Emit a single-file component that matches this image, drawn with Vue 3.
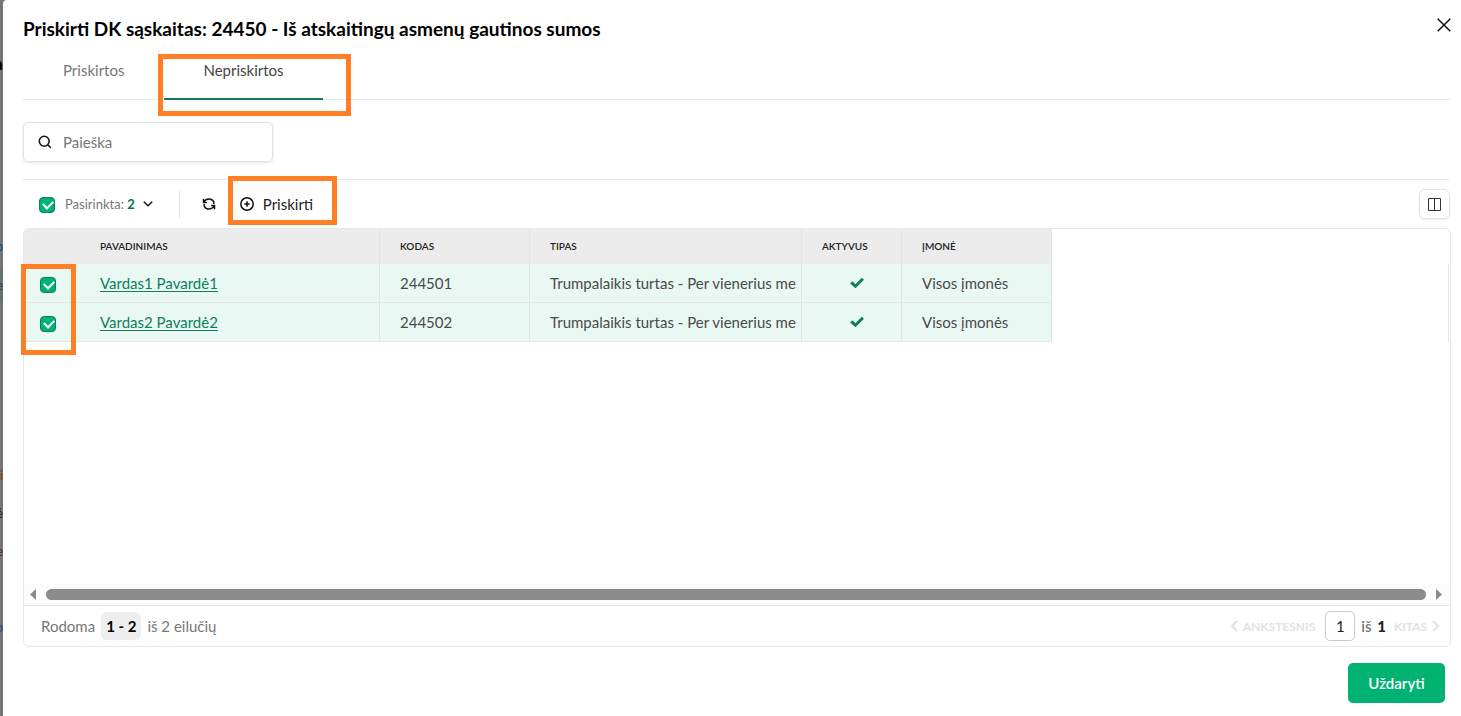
<script setup>
import { ref } from 'vue'

const search = ref('')
const page = ref('1')
const allSelected = ref(true)
const rows = ref([
  { id: 1, name: 'Vardas1 Pavardė1', code: '244501', type: 'Trumpalaikis turtas - Per vienerius me', company: 'Visos įmonės', selected: true },
  { id: 2, name: 'Vardas2 Pavardė2', code: '244502', type: 'Trumpalaikis turtas - Per vienerius me', company: 'Visos įmonės', selected: true }
])
</script>

<template>
  <div class="backdrop">
    <div class="behind" aria-hidden="true">
      <span class="bit bit-title">a</span>
      <span class="bit bit-link">p</span>
      <span class="band"></span>
      <span class="bit bit-row">e</span>
      <span class="bit bit-icon">i</span>
      <span class="bit bit-second">ė</span>
      <span class="bit bit-third">e</span>
      <span class="bit bit-last">o</span>
    </div>
    <section class="modal" role="dialog" aria-labelledby="dialog-title">
      <header class="head">
        <h1 id="dialog-title">Priskirti DK sąskaitas: 24450 - Iš atskaitingų asmenų gautinos sumos</h1>
        <button class="close" type="button" aria-label="Uždaryti langą">
          <svg width="14" height="14" viewBox="0 0 14 14"><path d="M.7.7l12.6 12.6M13.3.7L.7 13.3" /></svg>
        </button>
      </header>

      <nav class="tabs">
        <button class="tab" type="button">Priskirtos</button>
        <button class="tab active" type="button">Nepriskirtos<span class="mark mark-tab"></span></button>
      </nav>

      <label class="search">
        <svg width="14" height="14" viewBox="0 0 14 14"><circle cx="6.2" cy="6.2" r="4.9" /><path d="M9.8 9.8l3 3" /></svg>
        <input v-model="search" type="text" placeholder="Paieška" aria-label="Paieška" />
      </label>

      <div class="toolbar">
        <input v-model="allSelected" class="check" type="checkbox" aria-label="Pažymėti visas" />
        <button class="selected" type="button">
          <span>Pasirinkta: <b>2</b></span>
          <svg width="10" height="6" viewBox="0 0 10 6"><path d="M.8.8L5 4.8 9.2.8" /></svg>
        </button>
        <span class="divider"></span>
        <button class="refresh" type="button" aria-label="Atnaujinti">
          <svg width="14" height="14" viewBox="0 0 14 14">
            <path d="M1.800 5.200C3.600 1.300 9.600.6 11.800 4.900V7M1.500 1.800v3.600h3.400M12.200 8.800C10.400 12.700 4.400 13.400 2.200 9.100V7M12.500 12.200V8.600H9.100" />
          </svg>
        </button>
        <button class="assign" type="button">
          <svg width="14" height="14" viewBox="0 0 14 14"><circle cx="7" cy="7" r="6.2" /><path d="M7 4.3v5.4M4.3 7h5.4" /></svg>
          Priskirti
          <span class="mark mark-assign"></span>
        </button>
        <button class="columns" type="button" aria-label="Stulpeliai">
          <svg width="13" height="13" viewBox="0 0 13 13"><path d="M.5.5h12v12H.5zM6.5.5v12" /></svg>
        </button>
      </div>

      <div class="grid">
        <div class="rows">
          <table>
            <colgroup>
              <col class="c-check" /><col class="c-name" /><col class="c-code" />
              <col class="c-type" /><col class="c-active" /><col class="c-company" />
            </colgroup>
            <thead>
              <tr>
                <th class="pick"></th>
                <th>PAVADINIMAS</th>
                <th>KODAS</th>
                <th>TIPAS</th>
                <th>AKTYVUS</th>
                <th>ĮMONĖ</th>
              </tr>
            </thead>
            <tbody>
              <tr v-for="row in rows" :key="row.id">
                <td class="pick"><input v-model="row.selected" class="check" type="checkbox" :aria-label="row.name" /></td>
                <td><a href="#">{{ row.name }}</a></td>
                <td>{{ row.code }}</td>
                <td class="clip">{{ row.type }}</td>
                <td class="yes">
                  <svg width="14" height="11" viewBox="0 0 14 11"><path d="M1.200 5.300l4.200 3.900 7.500-7.500" /></svg>
                </td>
                <td>{{ row.company }}</td>
              </tr>
            </tbody>
          </table>
          <span class="edge"></span>
          <span class="mark mark-rows"></span>
        </div>
        <div class="scroll" aria-hidden="true">
          <svg width="6" height="11" viewBox="0 0 6 11"><path d="M6 0v11L0 5.5z" /></svg>
          <span class="thumb"></span>
          <svg width="6" height="11" viewBox="0 0 6 11"><path d="M0 0v11l6-5.5z" /></svg>
        </div>
        <footer class="pager">
          <span>Rodoma</span>
          <span class="range">1 - 2</span>
          <span>iš 2 eilučių</span>
          <div class="pages">
            <button class="step" type="button" disabled>
              <svg width="8" height="12" viewBox="0 0 8 12"><path d="M7 1L2 6l5 5" /></svg>ANKSTESNIS
            </button>
            <input v-model="page" class="page" type="text" aria-label="Puslapis" />
            <span class="of">iš <b>1</b></span>
            <button class="step" type="button" disabled>
              KITAS<svg width="8" height="12" viewBox="0 0 8 12"><path d="M1 1l5 5-5 5" /></svg>
            </button>
          </div>
        </footer>
      </div>

      <div class="actions">
        <button class="primary" type="button">Uždaryti</button>
      </div>
    </section>
  </div>
</template>

<style>
body {
  background: #757575;
}
</style>

<style scoped>
* {
  box-sizing: border-box;
}
.backdrop {
  display: flex;
  min-height: 100vh;
  background: #757575;
  font-family: Lato, "Open Sans", sans-serif;
  font-size: 15px;
  color: #4a4a4a;
}
button,
input {
  font: inherit;
  color: inherit;
  margin: 0;
}
button {
  padding: 0;
  border: 0;
  background: none;
  cursor: pointer;
}
svg {
  flex: none;
  fill: none;
  stroke: #111;
  stroke-width: 1.5;
}
.behind {
  position: relative;
  flex: none;
  width: 3px;
  overflow: hidden;
}
.bit {
  position: absolute;
  right: 0;
  font-size: 13px;
  line-height: 16px;
  color: #222;
}
.bit-title { top: 56px; font-size: 17px; font-weight: 700; color: #000; }
.bit-link { top: 238px; color: #1c4a70; }
.bit-row { top: 277px; color: #1c4a70; }
.bit-icon { top: 467px; color: #6b3f14; }
.bit-second { top: 505px; }
.bit-third { top: 543px; color: #5a2a3a; }
.bit-last { top: 619px; color: #1c4a70; }
.band {
  position: absolute;
  top: 268px;
  left: 0;
  width: 100%;
  height: 33px;
  background: #68716d;
}
.modal {
  flex: 1;
  min-width: 0;
  display: flex;
  flex-direction: column;
  padding: 0 10px 13px 20px;
  background: #fff;
  border-top-left-radius: 4px;
}
.head {
  display: flex;
  justify-content: space-between;
  height: 56px;
}
h1 {
  margin: 17px 0 0;
  font-size: 19px;
  line-height: 24px;
  font-weight: 700;
  color: #000;
}
.close {
  width: 14px;
  height: 14px;
  margin-top: 18px;
  display: flex;
}
.tabs {
  display: flex;
  height: 44px;
  border-bottom: 1px solid #e8e8e8;
}
.tab {
  position: relative;
  height: 44px;
  padding: 0 40px 16px;
  line-height: 28px;
  color: #777;
}
.active {
  border-bottom: 2px solid #0d7f5f;
  padding: 0 39px 14px;
  color: #444;
}
.mark {
  position: absolute;
  border: 5px solid #ff7f27;
  pointer-events: none;
}
.mark-tab { inset: -2px -28px -18px -6px; }
.mark-assign { inset: -14px -24px -7px -12px; }
.mark-rows { top: 35px; left: -3px; width: 55px; height: 91px; }
.search {
  display: flex;
  align-items: center;
  gap: 11px;
  width: 250px;
  height: 40px;
  margin: 22px 0 17px;
  padding: 0 14px;
  border: 1px solid #e3e3e3;
  border-radius: 5px;
  box-shadow: 0 1px 3px #0000001a;
}
.search input {
  width: 100%;
  padding: 0;
  border: 0;
  outline: 0;
}
.search input::placeholder {
  color: #777;
  opacity: 1;
}
.toolbar {
  display: flex;
  align-items: center;
  height: 49px;
  margin-right: 2px;
  padding-left: 16px;
  border-top: 1px solid #e8e8e8;
}
.check {
  appearance: none;
  display: block;
  flex: none;
  width: 16px;
  height: 16px;
  border: 1px solid #0d7f5f;
  border-radius: 4px;
}
.toolbar .check {
  margin-top: 2px;
}
.check:checked {
  background: #00b373;
}
.check:checked::before {
  content: "";
  display: block;
  width: 8px;
  height: 5px;
  margin: 3px;
  border: solid #fff;
  border-width: 0 0 2px 2px;
  transform-origin: 4px 3px;
  rotate: -45deg;
}
.selected {
  display: flex;
  align-items: center;
  gap: 8px;
  margin-left: 10px;
  font-size: 13px;
  color: #777;
}
.selected b {
  color: #0d6e56;
}
.divider {
  width: 1px;
  height: 27px;
  margin: 0 22px 0 26px;
  background: #e0e0e0;
}
.refresh {
  display: flex;
}
.assign {
  position: relative;
  display: flex;
  align-items: center;
  gap: 9px;
  height: 28px;
  margin-left: 24px;
  color: #222;
}
.columns {
  display: flex;
  align-items: center;
  justify-content: center;
  width: 31px;
  height: 30px;
  margin-left: auto;
  margin-right: -1px;
  border: 1px solid #e3e3e3;
  border-radius: 6px;
  box-shadow: 0 1px 2px #00000014;
}
.columns svg {
  stroke: #333;
  stroke-width: 1;
}
.grid {
  flex: 1;
  display: flex;
  flex-direction: column;
  border: 1px solid #e8e8e8;
  border-radius: 6px;
}
.rows {
  position: relative;
  flex: 1;
}
table {
  width: 1028px;
  table-layout: fixed;
  border-collapse: separate;
  border-spacing: 0;
}
.c-check { width: 56px; }
.c-name { width: 300px; }
.c-code { width: 150px; }
.c-type { width: 272px; }
.c-active { width: 100px; }
.c-company { width: 150px; }
th,
td {
  padding: 0 0 1px 20px;
  border-right: 1px solid #e3e3e3;
  text-align: left;
}
th {
  height: 35px;
  background: #ececec;
  font-size: 10px;
  font-weight: 600;
  color: #222;
}
th:first-child {
  border-top-left-radius: 5px;
}
td {
  height: 39px;
  background: #e9f8f3;
  border-bottom: 1px solid #e6e6e6;
}
.pick {
  padding: 0 0 0 16px;
  border-right: 0;
}
.pick .check {
  margin-top: 4px;
}
.clip {
  overflow: hidden;
  white-space: nowrap;
}
.yes {
  padding: 0 0 2px 10px;
  text-align: center;
}
.yes svg {
  stroke: #0d7f5f;
  stroke-width: 3;
}
a {
  color: #0d7f5f;
  text-underline-offset: 2px;
}
.edge {
  position: absolute;
  top: 35px;
  right: 1px;
  width: 1px;
  height: 78px;
  background: #e8e8e8;
}
.scroll {
  display: flex;
  align-items: center;
  gap: 10px;
  height: 21px;
  padding: 0 8px 0 6px;
  background: #fcfcfc;
}
.scroll svg {
  fill: #8a8a8a;
  stroke: none;
}
.thumb {
  flex: 1;
  height: 11px;
  border-radius: 6px;
  background: #8b8b8b;
}
.pager {
  display: flex;
  align-items: center;
  gap: 6px;
  height: 41px;
  padding: 0 10px 0 17px;
  border-top: 1px solid #e8e8e8;
  color: #777;
}
.range {
  min-width: 40px;
  padding: 0 5px;
  line-height: 28px;
  border-radius: 6px;
  background: #eee;
  text-align: center;
  font-weight: 700;
  color: #000;
}
.pages {
  display: flex;
  align-items: center;
  margin-left: auto;
}
.step {
  display: flex;
  align-items: center;
  gap: 5px;
  font-size: 12px;
  font-weight: 700;
  color: #e2e2e2;
}
.step svg {
  stroke: #e2e2e2;
  stroke-width: 2;
}
.page {
  width: 30px;
  height: 30px;
  margin: 0 6px 0 10px;
  padding: 0;
  border: 1px solid #ccc;
  border-radius: 5px;
  text-align: center;
  color: #222;
}
.of {
  margin-right: 8px;
  font-weight: 600;
}
.of b {
  margin-left: 2px;
  color: #222;
}
.actions {
  display: flex;
  justify-content: flex-end;
  padding: 16px 6px 0 0;
}
.primary {
  min-width: 97px;
  height: 40px;
  padding: 0 20px;
  border-radius: 5px;
  background: #00b373;
  font-weight: 600;
  color: #fff;
}
</style>
